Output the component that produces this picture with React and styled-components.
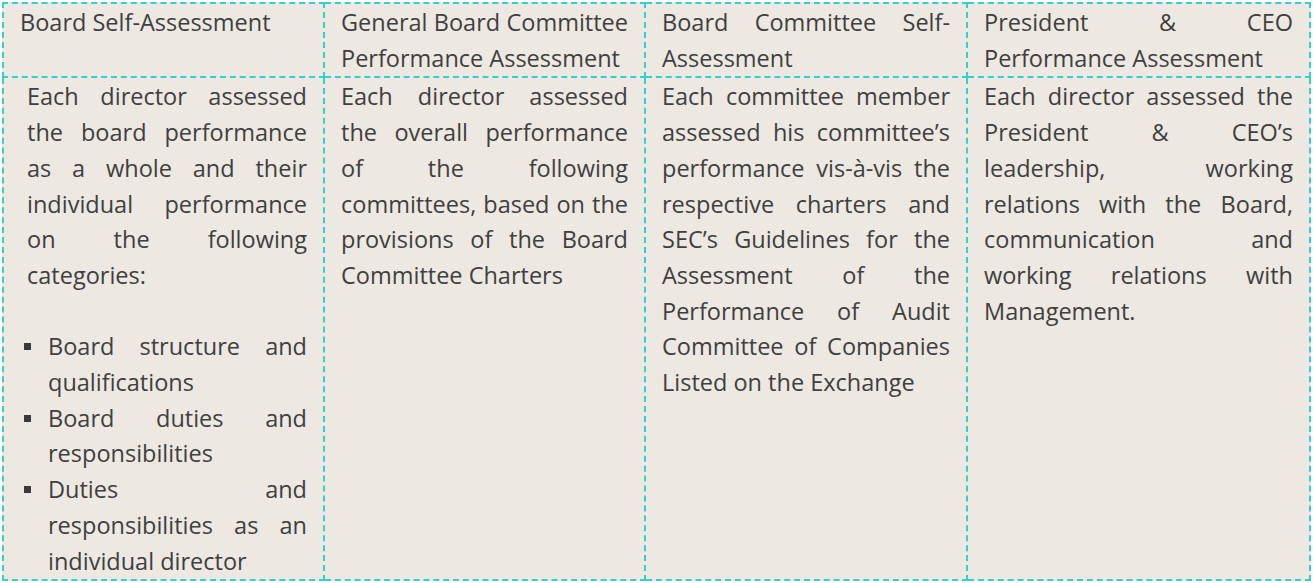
import React from "react";
import styled, { createGlobalStyle } from "styled-components";

const Global = createGlobalStyle`
  html, body { margin: 0; padding: 0; background: #ffffff; }
  body { font-family: "Open Sans", "Noto Sans", sans-serif; }
`;

const Wrap = styled.div`
  padding: 2px 3px 0 2px;
`;

const Table = styled.table`
  border-collapse: collapse;
  table-layout: fixed;
  width: 1307px;
  background: #ede8e2;
  color: #3f3f3f;
  font-size: 23.5px;
  line-height: 35.7px;
`;

const Cell = styled.td`
  border: 2px dashed #35cfcf;
  vertical-align: top;
  text-align: justify;
  padding: ${(p) => (p.$head ? "1px 16px 0 16px" : "1px 16px 0 " + (p.$indent ? "23px" : "16px"))};
`;

const Para = styled.p`
  margin: 0;
`;

const Blank = styled.div`
  height: 35.7px;
`;

const List = styled.ul`
  margin: 0;
  padding: 0;
  list-style: none;
`;

const Item = styled.li`
  position: relative;
  padding-left: 21px;
  &::before {
    content: "";
    position: absolute;
    left: -3px;
    top: 14px;
    width: 7px;
    height: 7px;
    background: #3a3a3a;
  }
`;

const headers = [
  "Board Self-Assessment",
  "General Board Committee Performance Assessment",
  "Board Committee Self-Assessment",
  "President & CEO Performance Assessment",
];

export default function App() {
  return (
    <Wrap>
      <Global />
      <Table>
        <colgroup>
          <col style={{ width: 321 }} />
          <col style={{ width: 321 }} />
          <col style={{ width: 322 }} />
          <col style={{ width: 343 }} />
        </colgroup>
        <tbody>
          <tr>
            {headers.map((h) => (
              <Cell $head key={h}>
                {h}
              </Cell>
            ))}
          </tr>
          <tr>
            <Cell $indent>
              <Para>
                Each director assessed the board performance as a whole and
                their individual performance on the following categories:
              </Para>
              <Blank />
              <List>
                <Item>Board structure and qualifications</Item>
                <Item>Board duties and responsibilities</Item>
                <Item>Duties and responsibilities as an individual director</Item>
              </List>
            </Cell>
            <Cell>
              <Para>
                Each director assessed the overall performance of the following
                committees, based on the provisions of the Board Committee
                Charters
              </Para>
            </Cell>
            <Cell>
              <Para>
                Each committee member assessed his committee’s performance
                vis-à-vis the respective charters and SEC’s Guidelines for the
                Assessment of the Performance of Audit Committee of Companies
                Listed on the Exchange
              </Para>
            </Cell>
            <Cell>
              <Para>
                Each director assessed the President &amp; CEO’s leadership,
                working relations with the Board, communication and working
                relations with Management.
              </Para>
            </Cell>
          </tr>
        </tbody>
      </Table>
    </Wrap>
  );
}
